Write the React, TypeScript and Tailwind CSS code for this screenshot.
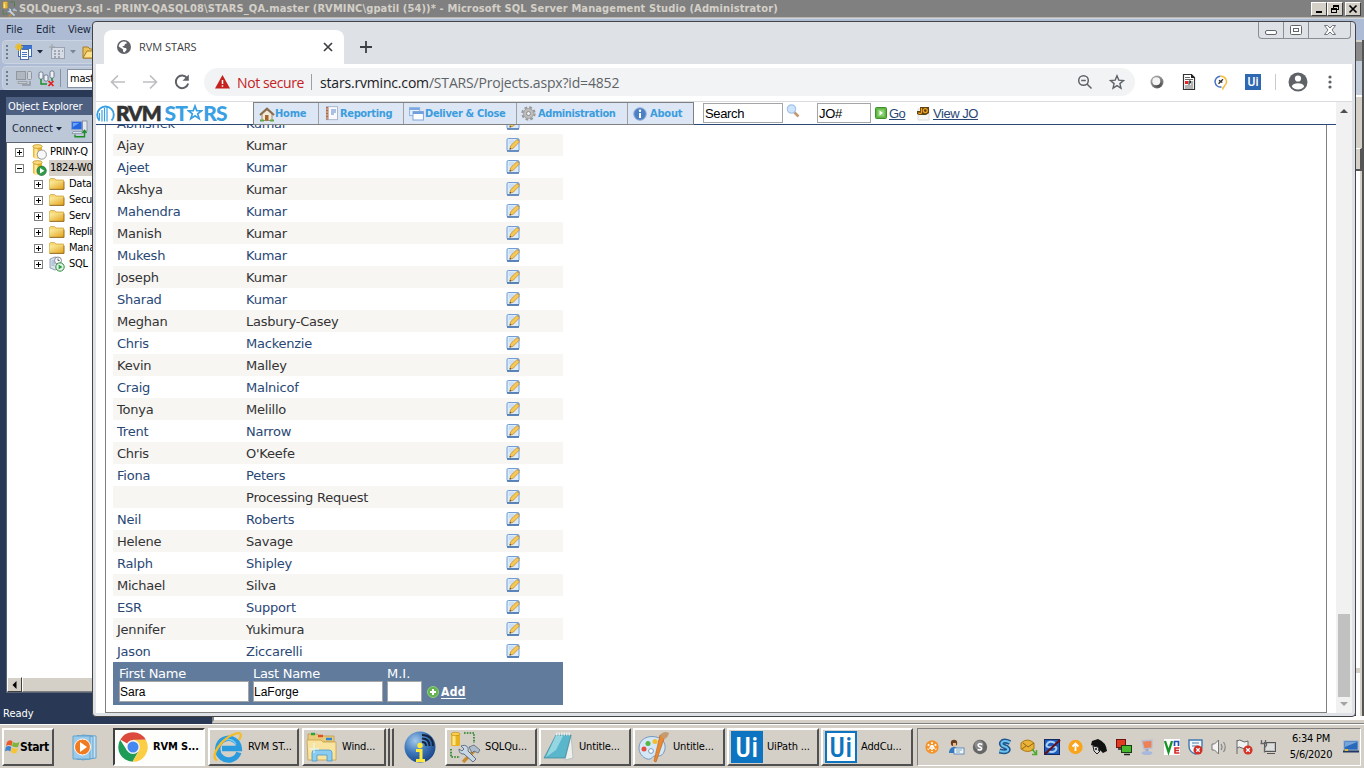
import React from "react";

const tahoma = "font-['DejaVu_Sans_Condensed','DejaVu_Sans',sans-serif] [font-stretch:condensed]";
const verdana = "font-['DejaVu_Sans',sans-serif]";
const segoe = "font-['Open_Sans',sans-serif]";
const arial = "font-['Liberation_Sans',sans-serif]";

const people: [string, string][] = [
  ["Abhishek", "Kumar"],
  ["Ajay", "Kumar"],
  ["Ajeet", "Kumar"],
  ["Akshya", "Kumar"],
  ["Mahendra", "Kumar"],
  ["Manish", "Kumar"],
  ["Mukesh", "Kumar"],
  ["Joseph", "Kumar"],
  ["Sharad", "Kumar"],
  ["Meghan", "Lasbury-Casey"],
  ["Chris", "Mackenzie"],
  ["Kevin", "Malley"],
  ["Craig", "Malnicof"],
  ["Tonya", "Melillo"],
  ["Trent", "Narrow"],
  ["Chris", "O'Keefe"],
  ["Fiona", "Peters"],
  ["", "Processing Request"],
  ["Neil", "Roberts"],
  ["Helene", "Savage"],
  ["Ralph", "Shipley"],
  ["Michael", "Silva"],
  ["ESR", "Support"],
  ["Jennifer", "Yukimura"],
  ["Jason", "Ziccarelli"],
];

function SqlToolsIcon({ size }: { size: number }) {
  return (
    <svg width={size} height={size} viewBox="0 0 32 32" className="shrink-0">
      <rect x="2" y="2" width="9" height="13" rx="1.5" fill="#e9b21d" />
      <rect x="3.5" y="3" width="3" height="11" fill="#fde58a" />
      <ellipse cx="6.5" cy="3" rx="4.5" ry="1.7" fill="#f8d04d" stroke="#b98208" strokeWidth=".6" />
      <path d="M15 2h10v10M2 18v8h9" fill="none" stroke="#1f7d1f" strokeWidth="1.6" strokeDasharray="1.6 1.2" />
      <path d="M27 18 14 31" stroke="#c98d31" strokeWidth="3.4" />
      <path d="M20 16l5-2 6 5-2 3-4-2-2 2z" fill="#aebccb" stroke="#586676" strokeWidth=".8" />
      <path d="M12 15l3 3-2 2-3-2c0 4 2 5 5 5l9 8 3-3-8-8c1-4-2-7-7-5z" fill="#c9d6e4" stroke="#50637b" strokeWidth=".9" />
    </svg>
  );
}

function EditIcon() {
  return (
    <svg width="14" height="16" viewBox="0 0 14 16" className="block">
      <rect x="1" y="1.5" width="12" height="12.500" rx="1.2" fill="#dcebfb" stroke="#6f9fd6" />
      <path d="M1 14h12" stroke="#24549a" strokeWidth="1.200" />
      <path d="M3 4h5M3 6h4M3 11.5h3" stroke="#b7cfea" strokeWidth=".9" />
      <path d="M3.800 12.200l1-3.700L11 2.500l2.500 2.300L7.300 11.200z" fill="#f6c956" stroke="#c18524" strokeWidth=".7" />
      <path d="M11 2.500l.9-.9 2 1.900-.9 1z" fill="#999" />
      <path d="M3.600 12.500l.5-1.500 1.200 1z" fill="#333" />
    </svg>
  );
}

function Expander({ open }: { open?: boolean }) {
  return (
    <svg width="9" height="9" viewBox="0 0 9 9" className="shrink-0" shapeRendering="crispEdges">
      <rect x=".5" y=".5" width="8" height="8" fill="#fff" stroke="#808080" />
      <path d={open ? "M2 4.5h5" : "M2 4.5h5M4.5 2v5"} stroke="#000" />
    </svg>
  );
}

function FolderIcon() {
  return (
    <svg width="16" height="14" viewBox="0 0 16 14" className="shrink-0">
      <defs>
        <linearGradient id="fold" x1="0" y1="0" x2="1" y2="1">
          <stop offset="0" stopColor="#fff0a8" />
          <stop offset="1" stopColor="#e2a21c" />
        </linearGradient>
      </defs>
      <path d="M.5 3.500V2.500l1-1h4L7 3h7.500V12H.5z" fill="#f7d873" stroke="#c9a548" strokeWidth=".8" />
      <path d="M.6 4.5h14.4V12H.6z" fill="url(#fold)" />
      <path d="M.6 12.400h14.400V4.5" fill="none" stroke="#8a6112" strokeWidth=".9" />
    </svg>
  );
}

function ServerIcon({ running }: { running?: boolean }) {
  return (
    <svg width="16" height="16" viewBox="0 0 16 16" className="shrink-0">
      <path d="M1 2.5v10.5c2 2 7 2 9 0V2.5z" fill="#eeb933" />
      <path d="M2.5 3v11.2c1 .4 2 .5 3 .5V3z" fill="#fde9a4" />
      <ellipse cx="5.5" cy="2.5" rx="4.7" ry="1.9" fill="#fbdc79" stroke="#b98c1b" strokeWidth=".7" />
      {running ? (
        <>
          <circle cx="9.6" cy="10.8" r="4.7" fill="#2f9c49" stroke="#1a6d2e" strokeWidth=".7" />
          <path d="M8 8l4.3 2.8L8 13.6z" fill="#fff" />
        </>
      ) : (
        <circle cx="9.8" cy="10.6" r="4.6" fill="#f7f8fa" stroke="#8c8c8c" strokeWidth=".9" />
      )}
    </svg>
  );
}

function AgentIcon() {
  return (
    <svg width="16" height="16" viewBox="0 0 16 16" className="shrink-0">
      <path d="M1 3l5-2 5 1v10l-5 2-5-2z" fill="#d9e3ef" stroke="#7c8da3" strokeWidth=".8" />
      <path d="M2.5 5h4M2.5 7h4M2.5 9h3" stroke="#8299b6" strokeWidth=".8" />
      <circle cx="9" cy="4.5" r="3.5" fill="#f4f6f8" stroke="#778" strokeWidth=".8" />
      <path d="M9 2.5v2h1.6" fill="none" stroke="#345" strokeWidth=".8" />
      <circle cx="11" cy="11" r="4.2" fill="#e5f3e6" stroke="#2a8b3c" strokeWidth="1" />
      <path d="M9.6 8.5l3.8 2.5-3.8 2.5z" fill="#2f9c49" />
    </svg>
  );
}

function ConnectIcon() {
  return (
    <svg width="17" height="18" viewBox="0 0 17 18" className="shrink-0">
      <rect x=".6" y="1.5" width="10.5" height="8" fill="#2366e0" stroke="#8aa4cf" strokeWidth="1.1" />
      <path d="M2 3h6l-6 4z" fill="#6fa3fb" />
      <path d="M2 11.5h9v2H1z" fill="#dfe5ee" stroke="#7b8ca5" strokeWidth=".7" />
      <rect x="11.5" y="1" width="4.5" height="10" fill="#e4e7ec" stroke="#7e8998" strokeWidth=".8" />
      <path d="M4 14.5v2.3h9.5V11M11.5 13l2-2.6 2 2.6" fill="none" stroke="#199020" strokeWidth="1.4" />
    </svg>
  );
}

function Grip() {
  return (
    <svg width="3" height="16" viewBox="0 0 3 16" className="shrink-0" shapeRendering="crispEdges">
      <path d="M1 1v14" stroke="#6b7c97" strokeWidth="2" strokeDasharray="2 2" />
    </svg>
  );
}

function ClassicButton({ children, className = "" }: { children: React.ReactNode; className?: string }) {
  return (
    <div className={"flex items-center justify-center h-[14px] bg-[#d4d0c8] border border-t-white border-l-white border-r-[#404040] border-b-[#404040] " + className}>
      {children}
    </div>
  );
}

function TitleBar() {
  return (
    <div className="flex items-center h-[18px] bg-[#808080] border-b border-b-[#b8b5ae] pl-[2px] pr-[3px] shrink-0">
      <SqlToolsIcon size={16} />
      <div className={tahoma + " ml-px grow text-[11px] font-bold text-[#d4d0c8] whitespace-nowrap tracking-[0.120px] leading-[16px] pt-px"}>
        SQLQuery3.sql - PRINY-QASQL08\STARS_QA.master (RVMINC\gpatil (54))* - Microsoft SQL Server Management Studio (Administrator)
      </div>
      <ClassicButton className="w-[16px]">
        <svg width="10" height="10"><path d="M2 8h6" stroke="#000" strokeWidth="2" /></svg>
      </ClassicButton>
      <ClassicButton className="w-[16px]">
        <svg width="10" height="10" shapeRendering="crispEdges">
          <path d="M3.500 4V1.500h5v4H7M3 2h6" fill="none" stroke="#000" />
          <path d="M1.500 4.500h5v4h-5zM1 5h6" fill="none" stroke="#000" />
        </svg>
      </ClassicButton>
      <ClassicButton className="w-[16px] ml-[2px]">
        <svg width="10" height="10"><path d="M1.500 1.500l7 7M8.500 1.500l-7 7" stroke="#000" strokeWidth="1.700" /></svg>
      </ClassicButton>
    </div>
  );
}

function TreeRow({ label, icon, indent, open, selected }: { label: string; icon: React.ReactNode; indent?: boolean; open?: boolean; selected?: boolean }) {
  return (
    <div className={"flex items-center h-[16px] " + (indent ? "pl-[27px]" : "pl-[8px]")}>
      <Expander open={open} />
      <div className={"flex w-[18px] justify-center " + (indent ? "ml-[5px] mr-[2px]" : "ml-[7px]")}>{icon}</div>
      <div className={"grow h-[16px] leading-[16px] pl-[1px] whitespace-nowrap text-[11px] tracking-[-0.250px] text-black " + (selected ? "bg-[#d4d0c8]" : "")}>{label}</div>
    </div>
  );
}

function ManagementStudio() {
  return (
    <div className={tahoma + " flex flex-col w-[1364px] h-[722px] bg-[#293955]"}>
      <TitleBar />
      <div className="flex items-center h-[22px] shrink-0 bg-[#adbcd4] border-t border-t-[#d0d5dc] pl-[6px] pt-px text-[11px] text-[#1b293e]">
        <span className="w-[30px]">File</span>
        <span className="w-[32px]">Edit</span>
        <span className="tracking-[-0.200px]">View</span>
      </div>
      <div className="flex h-[682px] shrink-0">
        <div className="flex flex-col w-[1356px]">
          <div className="flex flex-col h-[50px] shrink-0 bg-[#adbcd4] pl-[2px] gap-[2px]">
            <div className="flex items-center h-[24px] rounded-l-[4px] bg-[#bcc7d8] border border-[#cad3e2] pl-[3px]">
              <Grip />
              <svg width="18" height="18" viewBox="0 0 18 18" className="ml-[6px]">
                <rect x="3.500" y="2.500" width="13" height="11" fill="#fff" stroke="#3d68b4" />
                <path d="M3 4.500h14" stroke="#3b76d6" strokeWidth="3" />
                <rect x="5.500" y="6.500" width="8" height="10" fill="#fff" stroke="#53719f" />
                <path d="M7 9.500h5M7 11.500h5M7 13.500h5" stroke="#4a76bf" />
                <path d="M4 0v8M0 4h8M1.300 1.300l5.400 5.400M6.700 1.300L1.300 6.700" stroke="#eebc22" strokeWidth="1.300" />
              </svg>
              <svg width="6" height="4" className="ml-[4px]"><path d="M0 0h6L3 3.500z" fill="#1b293e" /></svg>
              <svg width="16" height="16" viewBox="0 0 16 16" className="ml-[6px] opacity-60">
                <rect x="2.500" y="3.500" width="13" height="11" fill="#e8eaee" stroke="#858b95" />
                <path d="M5 7h2M9 7h2M13 7h1M5 10h2M9 10h2M5 13h2M9 13h2" stroke="#707680" strokeWidth="1.500" />
                <path d="M3 0v6M0 3h6" stroke="#888" />
              </svg>
              <svg width="6" height="4" className="ml-[5px]"><path d="M0 0h6L3 3.500z" fill="#7b8695" /></svg>
              <svg width="18" height="16" viewBox="0 0 18 16" className="ml-[6px] shrink-0">
                <path d="M1 14V3h5l2 2h7v9z" fill="#eac15b" stroke="#a77d26" />
                <path d="M1 14L5 7h12l-3 7z" fill="#fde08b" stroke="#a77d26" />
              </svg>
            </div>
            <div className="flex items-center h-[24px] rounded-l-[4px] bg-[#bcc7d8] border border-[#cad3e2] pl-[3px]">
              <Grip />
              <svg width="17" height="16" viewBox="0 0 17 16" className="ml-[7px] opacity-60">
                <rect x=".5" y="1.500" width="9" height="8" fill="#a9adb3" stroke="#777" />
                <path d="M2 11.500h9v2H2z" fill="#ccc" stroke="#888" />
                <rect x="11.500" y="1.500" width="4" height="8" rx="1" fill="#ddd" stroke="#777" />
                <path d="M6 15h8v-4" fill="none" stroke="#777" strokeWidth="1.500" />
              </svg>
              <svg width="17" height="17" viewBox="0 0 17 17" className="ml-[5px]">
                <rect x="1" y="2" width="4" height="7" rx="1.500" fill="#eef1f5" stroke="#6d7a8e" />
                <rect x="6" y="5" width="4" height="6" rx="1.500" fill="#eef1f5" stroke="#6d7a8e" />
                <rect x="12" y="1" width="4" height="7" rx="1.500" fill="#eef1f5" stroke="#6d7a8e" />
                <path d="M3 9v5h6M14 8v3" fill="none" stroke="#1e8e2b" strokeWidth="1.500" />
                <path d="M10.500 11l5 5M15.500 11l-5 5" stroke="#e02020" strokeWidth="1.700" />
              </svg>
              <div className="ml-[5px] h-[18px] w-px bg-[#8591a5]" />
              <div className="ml-[6px] h-[19px] w-[300px] bg-white border border-[#8591a5] pl-[2px] text-[11px] leading-[18px] text-black tracking-[-0.250px]">mast</div>
            </div>
          </div>
          <div className="flex flex-col ml-[6px] mt-[7px] w-[300px]">
            <div className="h-[18px] bg-[#4d6082] pl-[2px] text-[11px] leading-[19px] text-white whitespace-nowrap tracking-[-0.150px]">Object Explorer</div>
            <div className="flex items-center h-[27px] bg-[#bcc7d8] pl-[6px] pt-px text-[11px] text-[#1b293e]">
              <span className="w-[44px] pt-px whitespace-nowrap">Connect</span>
              <svg width="6" height="4"><path d="M0 0h6L3 3.500z" fill="#1b293e" /></svg>
              <div className="ml-[9px]"><ConnectIcon /></div>
            </div>
            <div className="flex flex-col h-[551px] bg-white border border-[#5b6474] pt-[1px]">
              <TreeRow label="PRINY-Q" icon={<ServerIcon />} />
              <TreeRow label="1824-W0" icon={<ServerIcon running />} open selected />
              <TreeRow label="Data" icon={<FolderIcon />} indent />
              <TreeRow label="Secu" icon={<FolderIcon />} indent />
              <TreeRow label="Serv" icon={<FolderIcon />} indent />
              <TreeRow label="Repli" icon={<FolderIcon />} indent />
              <TreeRow label="Mana" icon={<FolderIcon />} indent />
              <TreeRow label="SQL" icon={<AgentIcon />} indent />
              <div className="mt-auto flex h-[15px] bg-[#d4d0c8]">
                <ClassicButton className="w-[15px] !h-[15px]">
                  <svg width="5" height="8"><path d="M4.500 0v8L.5 4z" fill="#000" /></svg>
                </ClassicButton>
                <div className="grow border border-t-white border-l-white border-b-[#808080]" />
              </div>
            </div>
            <div className="h-[28px] -ml-[3px] pt-[13px] text-[11px] leading-[16px] text-white">Ready</div>
          </div>
        </div>
        <div className="flex flex-col w-[8px] bg-[#d4d0c8] border-r-2 border-r-[#555]">
          <div className="h-[21px] bg-[#8a8a8a] border-t-2 border-t-[#d4d0c8]" />
          <div className="h-[36px] bg-[#c3ccd9] border-b-2 border-b-white" />
          <div className="h-[51px]" />
          <div className="h-[23px] border-t border-t-white border-r-2 border-r-[#555] border-b-2 border-b-[#555]" />
          <div className="h-[497px] bg-white border-r-2 border-r-[#d4d0c8]" />
          <div className="h-[5px]" />
          <div className="grow bg-white border-r-2 border-r-[#d4d0c8]" />
        </div>
      </div>
    </div>
  );
}

function BrowserIcons() {
  return (
    <div className="flex items-center">
      <svg width="20" height="20" viewBox="0 0 20 20" className="ml-[12px]">
        <defs>
          <radialGradient id="orb" cx=".6" cy=".7" r=".7">
            <stop offset="0" stopColor="#3e3e3e" />
            <stop offset="1" stopColor="#a7a7a7" />
          </radialGradient>
        </defs>
        <circle cx="10" cy="10" r="6.500" fill="url(#orb)" />
        <circle cx="9.300" cy="9.300" r="4" fill="#f5f5f5" />
      </svg>
      <svg width="14" height="18" viewBox="0 0 14 18" className="ml-[15px]">
        <path d="M1.500 1.500h8l3 3v12h-11z" fill="#fff" stroke="#333" strokeWidth="1.200" />
        <path d="M9 1v4h4z" fill="#222" />
        <path d="M3 4.500h5M3 6.500h8M3 13h8M3 15h8M9 9h2M9 11h2" stroke="#666" />
        <path d="M3 8h3v3H3z" fill="#e22" />
        <path d="M7 12V8h1.500v2H7" fill="none" stroke="#222" />
      </svg>
      <svg width="16" height="16" viewBox="0 0 16 16" className="ml-[17px]">
        <path d="M8.500 13A5.400 5.400 0 1 1 7.500 2.300" fill="none" stroke="#4976c5" strokeWidth="1.500" />
        <path d="M7.500 2.300a5.400 5.400 0 0 1 4 9.500L10 14.500V13" fill="none" stroke="#f6bd3b" strokeWidth="1.500" />
        <path d="M5.500 9.800l4.500-4.500M6 6.300l3.300 2.200" stroke="#333" strokeWidth="1.400" />
      </svg>
      <div className="ml-[16px] flex items-center justify-center w-[16px] h-[16px] bg-[#2f68b2] text-white text-[12px] leading-[16px] font-medium font-['Roboto',sans-serif]">Ui</div>
      <div className="ml-[14px] h-[16px] w-px bg-[#c9cbce]" />
      <svg width="20" height="20" viewBox="0 0 20 20" className="ml-[12px]">
        <circle cx="10" cy="10" r="9.500" fill="#5f6368" />
        <circle cx="10" cy="6.500" r="3.100" fill="#fff" />
        <path d="M3.800 14.500c1-4.300 11.400-4.300 12.400 0-2.600 4-9.800 4-12.400 0z" fill="#fff" />
      </svg>
      <svg width="4" height="16" viewBox="0 0 4 16" className="ml-[20px]">
        <circle cx="2" cy="3" r="1.600" fill="#5f6368" />
        <circle cx="2" cy="8" r="1.600" fill="#5f6368" />
        <circle cx="2" cy="13" r="1.600" fill="#5f6368" />
      </svg>
    </div>
  );
}

function HomeIcon() {
  return (
    <svg width="16" height="16" viewBox="0 0 16 16">
      <path d="M3 8v6.500h10V8L8 4z" fill="#f2ead9" stroke="#8c7a5c" strokeWidth=".8" />
      <path d="M1 9l7-6.500L15 9" fill="none" stroke="#8b6d4b" strokeWidth="2" />
      <rect x="6" y="9" width="3.500" height="5.500" fill="#a6662b" />
      <path d="M1 14.500h4M11 14.500h4" stroke="#62a646" strokeWidth="2" />
    </svg>
  );
}

function NotebookIcon() {
  return (
    <svg width="13" height="15" viewBox="0 0 13 15">
      <rect x="1.500" y=".7" width="11" height="13" fill="#f8faff" stroke="#9aa9c2" strokeWidth=".8" />
      <path d="M1 1v12.500h2.500V1z" fill="#b06a4a" />
      <path d="M0 3h3M0 6h3M0 9h3M0 12h3" stroke="#ddd" strokeWidth=".8" />
      <path d="M6 4h5M6 6h5M6 8h3" stroke="#5c88c9" />
    </svg>
  );
}

function WindowsIcon() {
  return (
    <svg width="15" height="14" viewBox="0 0 15 14">
      <rect x=".6" y=".6" width="10" height="8" fill="#e9f2fc" stroke="#8fb4e2" />
      <path d="M.6 2h10" stroke="#7ea9e0" strokeWidth="2" />
      <rect x="4" y="4.500" width="10.400" height="8.500" fill="#fdfeff" stroke="#7ea6d9" />
      <path d="M4 6h10.400" stroke="#6f9fdd" strokeWidth="2" />
    </svg>
  );
}

function GearIcon() {
  return (
    <svg width="15" height="15" viewBox="0 0 15 15">
      <circle cx="7.500" cy="7.500" r="6" fill="none" stroke="#9a9a9a" strokeWidth="2.400" strokeDasharray="2.700 2.012" />
      <circle cx="7.500" cy="7.500" r="5" fill="#bdbdbd" stroke="#a2a2a2" />
      <circle cx="7.500" cy="7.500" r="2" fill="#eee" stroke="#8e8e8e" />
    </svg>
  );
}

function InfoIcon() {
  return (
    <svg width="14" height="14" viewBox="0 0 14 14">
      <circle cx="7" cy="7" r="6.300" fill="#4d7fc4" stroke="#9ab6dc" />
      <path d="M7 6v5" stroke="#fff" strokeWidth="2" />
      <circle cx="7" cy="3.800" r="1.200" fill="#fff" />
    </svg>
  );
}

function RvmLogo() {
  return (
    <div className="flex items-center w-[157px] h-[21px] font-['Lato',sans-serif] font-black leading-[20px]">
      <svg width="19" height="18" viewBox="0 0 19 18" className="shrink-0">
        <path d="M3.500 16.500A8.300 8.300 0 1 1 15.500 16.500" fill="none" stroke="#3aa0e4" strokeWidth="1.900" />
        <path d="M3.500 16.500V9M6 17.500V6M8.500 17.500V4M11 17.500V2" stroke="#3aa0e4" strokeWidth="1.200" />
      </svg>
      <span className="text-[21px] tracking-[-1.100px] text-[#333] ml-[1px] [-webkit-text-stroke:0.6px_#333]">RVM</span>
      <span className="flex items-center ml-[4px] text-[21px] tracking-[-0.800px] text-[#3aa0e4]">
        ST
        <svg width="16" height="17" viewBox="0 0 15 17">
          <path d="M7.500 2l1.700 4.600 5 .1-4 3 1.500 5-4.200-3-4.200 3 1.500-5-4-3 5-.1z" fill="#fff" stroke="#3aa0e4" strokeWidth="1.700" />
        </svg>
        RS
      </span>
    </div>
  );
}

function NavItem({ icon, label, className }: { icon: React.ReactNode; label: string; className: string }) {
  return (
    <div className={"flex items-center h-full text-[11px] font-bold text-[#3b9ddd] whitespace-nowrap " + className}>
      {icon}
      <span className="leading-[20px]">{label}</span>
    </div>
  );
}

function SiteHeader() {
  return (
    <div className="flex h-[23px] shrink-0 bg-white border-b border-b-[#284775]">
      <RvmLogo />
      <div className={tahoma + " flex w-[441px] h-[23px] bg-[#dde6f5] border border-[#808080]"}>
        <NavItem icon={<HomeIcon />} label="Home" className="w-[64px] pl-[5px] tracking-[-0.200px]" />
        <NavItem icon={<NotebookIcon />} label="Reporting" className="w-[85px] pl-[6px] gap-[2px] border-l border-l-[#a0a0a0] tracking-[-0.350px]" />
        <NavItem icon={<WindowsIcon />} label="Deliver & Close" className="w-[113px] pl-[5px] gap-[1px] border-l border-l-[#a0a0a0] tracking-[-0.330px]" />
        <NavItem icon={<GearIcon />} label="Administration" className="w-[111px] pl-[4px] gap-[2px] border-l border-l-[#a0a0a0] tracking-[-0.400px]" />
        <NavItem icon={<InfoIcon />} label="About" className="grow pl-[5px] gap-[3px] border-l border-l-[#a0a0a0] tracking-[-0.200px]" />
      </div>
      <div className={arial + " flex items-center text-[13px] text-black"}>
        <div className="ml-[9px] w-[80px] h-[20px] border border-[#a5a5a5] pl-[1px] leading-[20px] tracking-[-0.350px]">Search</div>
        <svg width="14" height="14" viewBox="0 0 14 14" className="ml-[3px] mb-[5px]">
          <path d="M8 8l4.500 4.500" stroke="#c59a72" strokeWidth="2.600" />
          <circle cx="5.500" cy="5" r="4.200" fill="#cfe4fa" stroke="#a5c6ec" strokeWidth="1.200" />
        </svg>
        <div className="ml-[17px] w-[54px] h-[20px] border border-[#a5a5a5] pl-[1px] leading-[20px] tracking-[-0.300px]">JO#</div>
        <svg width="12" height="12" viewBox="0 0 12 12" className="ml-[4px]">
          <rect x=".5" y=".5" width="11" height="11" rx="1" fill="#5fb544" stroke="#3e8f2a" />
          <rect x="2.500" y="2.500" width="7" height="7" fill="#8bd06f" />
          <path d="M4.500 3.500L8 6 4.500 8.500z" fill="#fff" />
        </svg>
        <span className="ml-[2px] w-[16px] pt-[2px] text-[#284775] underline underline-offset-1 tracking-[-0.500px]">Go</span>
        <svg width="13" height="15" viewBox="0 0 13 15" className="ml-[12px]">
          <path d="M1 3h11v11H1z" fill="#f5f5f3" stroke="#ddd" />
          <path d="M3 1h9v6l-3 2H2L0 8V5h3z" fill="#5d4213" />
          <path d="M4.500 2v4.500c0 1.500-2.500 1.500-3 0" fill="none" stroke="#f1a11e" strokeWidth="1.300" />
          <circle cx="8.300" cy="4.600" r="2" fill="none" stroke="#f1a11e" strokeWidth="1.300" />
        </svg>
        <span className="ml-[3px] pt-[2px] text-[#284775] underline underline-offset-1 tracking-[-0.450px]">View JO</span>
      </div>
    </div>
  );
}

function AddPersonForm() {
  return (
    <div className="flex h-[43px] bg-[#617b9d] pl-[6px] gap-[4px] text-[13px] text-white">
      <div className="w-[130px]">
        <div className="h-[19px] leading-[23px] tracking-[-0.300px]">First Name</div>
        <div className={arial + " h-[21px] bg-white border border-[#a5a5a5] text-black text-[12px] leading-[20px]"}>Sara</div>
      </div>
      <div className="w-[130px]">
        <div className="h-[19px] leading-[23px] tracking-[-0.300px]">Last Name</div>
        <div className={arial + " h-[21px] bg-white border border-[#a5a5a5] text-black text-[12px] leading-[20px]"}>LaForge</div>
      </div>
      <div className="w-[35px]">
        <div className="h-[19px] leading-[23px] whitespace-nowrap">M.I.</div>
        <div className="h-[21px] bg-white border border-[#a5a5a5]" />
      </div>
      <div className="flex items-center h-[20px] mt-[20px] ml-[1px] gap-[2px]">
        <svg width="12" height="12" viewBox="0 0 12 12" className="-mt-px">
          <circle cx="6" cy="6" r="5.500" fill="#65b250" stroke="#91cb80" />
          <path d="M6 3v6M3 6h6" stroke="#fff" strokeWidth="2" />
        </svg>
        <span className={tahoma + " font-bold text-[12px] underline underline-offset-2 tracking-[0.300px]"}>Add</span>
      </div>
    </div>
  );
}

function PeopleTable() {
  return (
    <div className={verdana + " flex flex-col w-[450px] text-[13px]"}>
      {people.map(([first, last], i) => (
        <div key={i} className={"flex items-center h-[22px] leading-[20px] tracking-[-0.230px] " + (i % 2 ? "bg-[#f7f6f3] text-[#333]" : "bg-white text-[#284775]")}>
          <div className="w-[129px] pl-[4px] pt-[2px] whitespace-nowrap">{first}</div>
          <div className="w-[264px] pl-[4px] pt-[2px] whitespace-nowrap">{last}</div>
          <EditIcon />
        </div>
      ))}
      <AddPersonForm />
    </div>
  );
}

function Browser() {
  return (
    <div className="flex flex-col w-[1264px] h-[696px] bg-[#dee1e6] border border-[#444] rounded-[4px] pl-[3px] pr-[3px] overflow-hidden">
      <div className="flex h-[42px] shrink-0">
        <div className={segoe + " flex items-center self-end ml-[8px] w-[240px] h-[34px] bg-white rounded-t-[8px] pl-[12px] pr-[11px] text-[12px] text-[#3c4043]"}>
          <svg width="16" height="16" viewBox="0 0 16 16">
            <circle cx="8" cy="8" r="7" fill="#5f6368" />
            <path d="M7 2.500l3 .2 1 1.600-2 .8-.6 1.700-2.200.7 1.700 1.300 2.300.4.500 1.500-2.300 2.800-1.200-.7-.3-2.500L4.600 8.700 2.700 7.600c.2-2.400 1.900-4.500 4.300-5.100z" fill="#fff" />
          </svg>
          <span className="ml-[7px] grow text-[11px] pt-px tracking-[-0.050px]">RVM STARS</span>
          <svg width="10" height="10"><path d="M1 1l8 8M9 1L1 9" stroke="#3c4043" strokeWidth="1.700" /></svg>
        </div>
        <svg width="14" height="14" className="ml-[15px] mt-[18px]"><path d="M7 1v12M1 7h12" stroke="#3c4043" strokeWidth="1.800" /></svg>
        <div className="ml-auto mr-[1px] flex w-[93px] h-[17px] border border-t-0 border-[#8b8e93] rounded-b-[4px]">
          <div className="flex items-end justify-center w-[25px] pb-[3px] border-r border-r-[#8b8e93]">
            <svg width="12" height="5"><rect x=".5" y=".5" width="11" height="4" rx="1.500" fill="#fff" stroke="#62656a" /></svg>
          </div>
          <div className="flex items-center justify-center w-[25px] border-r border-r-[#8b8e93]">
            <svg width="12" height="10"><rect x=".5" y=".5" width="11" height="9" rx="1" fill="#fff" stroke="#62656a" /><rect x="3.500" y="3.500" width="5" height="3" fill="none" stroke="#62656a" /></svg>
          </div>
          <div className="flex items-center justify-center grow">
            <svg width="12" height="10" viewBox="0 0 12 10"><path d="M.5.5h3L6 3 8.500.5h3L8 5l3.500 4.500h-3L6 7 3.500 9.500h-3L4 5z" fill="#fff" stroke="#62656a" strokeWidth=".9" /></svg>
          </div>
        </div>
      </div>
      <div className="flex items-center h-[38px] shrink-0 bg-white border-b border-b-[#dadce0] pl-[13px] pb-px">
        <svg width="18" height="18" viewBox="0 0 18 18"><path d="M9 2.500L2.500 9 9 15.500M2.500 9H16" fill="none" stroke="#bcbec1" strokeWidth="1.700" /></svg>
        <svg width="18" height="18" viewBox="0 0 18 18" className="ml-[14px]"><path d="M9 2.500L15.500 9 9 15.500M15.500 9H2" fill="none" stroke="#bcbec1" strokeWidth="1.700" /></svg>
        <svg width="18" height="18" viewBox="0 0 18 18" className="ml-[14px]">
          <path d="M14.300 5.200A6.300 6.300 0 1 0 15.200 10.500" fill="none" stroke="#5f6368" strokeWidth="2" />
          <path d="M15.800 1.500v6.300H9.500z" fill="#5f6368" />
        </svg>
        <div className={segoe + " flex items-center ml-[13px] w-[931px] h-[28px] rounded-full bg-[#f1f3f4] pl-[11px] pr-[10px] text-[14px] text-[#202124]"}>
          <svg width="15" height="14" viewBox="0 0 15 14"><path d="M7.500 0L15 13.500H0z" fill="#c5221f" /><path d="M7.500 5v4M7.500 10.200v1.600" stroke="#fff" strokeWidth="1.500" /></svg>
          <span className="ml-[7px] w-[73px] shrink-0 whitespace-nowrap tracking-[-0.400px] text-[#c5221f]">Not secure</span>
          <span className="w-px h-[16px] mr-[8px] ml-px bg-[#9aa0a6]" />
          <span className="grow whitespace-nowrap tracking-[-0.180px] text-[#5f6368]"><span className="text-[#202124]">stars.rvminc.com</span>/STARS/Projects.aspx?id=4852</span>
          <svg width="16" height="16" viewBox="0 0 16 16"><circle cx="6.500" cy="6.500" r="4.800" fill="none" stroke="#5f6368" strokeWidth="1.500" /><path d="M10 10l4.500 4.500M4.200 6.500h4.600" stroke="#5f6368" strokeWidth="1.500" /></svg>
          <svg width="16" height="16" viewBox="0 0 16 16" className="ml-[16px]"><path d="M8 1.800l1.800 4.300 4.700.4-3.600 3.100 1.100 4.600L8 11.700l-4 2.500 1.100-4.600L1.500 6.500l4.700-.4z" fill="none" stroke="#5f6368" strokeWidth="1.400" /></svg>
        </div>
        <BrowserIcons />
      </div>
      <div className="flex h-[611px] shrink-0 bg-white">
        <div className="flex flex-col w-[1240px]">
          <SiteHeader />
          <div className="flex ml-[9px] w-[1222px] h-[588px] border border-t-0 border-[#808080] overflow-hidden pl-[7px]">
            <div className="-mt-[13px]">
              <PeopleTable />
            </div>
          </div>
        </div>
        <div className="flex flex-col items-center w-[16px] bg-[#f1f1f1]">
          <svg width="8" height="4" className="mt-[7px]"><path d="M0 4h8L4 0z" fill="#505050" /></svg>
          <div className="mt-[501px] w-[12px] h-[83px] bg-[#c1c1c1]" />
          <svg width="8" height="4" className="mt-[5px]"><path d="M0 0h8L4 4z" fill="#a3a3a3" /></svg>
        </div>
      </div>
    </div>
  );
}

function TaskButton({ icon, label, active, className = "" }: { icon: React.ReactNode; label: string; active?: boolean; className?: string }) {
  return (
    <div className={"flex items-center h-[38px] border-2 pl-[2px] text-[11px] text-black whitespace-nowrap tracking-[-0.150px] " + (active ? "bg-[#fdfdfc] border-t-[#404040] border-l-[#404040] border-r-white border-b-white font-bold " : "bg-[#d4d0c8] border-t-white border-l-white border-r-[#505050] border-b-[#505050] ") + className}>
      {icon}
      <span className="ml-[4px]">{label}</span>
    </div>
  );
}

function ChromeLogo() {
  return (
    <svg width="30" height="30" viewBox="0 0 30 30" className="shrink-0 ml-[1px] mr-px">
      <path d="M15 15L2.300 7.500A14.700 14.700 0 0 1 27.800 7.800L15 8z" fill="#dc4a3d" />
      <path d="M2.200 7.700A14.700 14.700 0 0 0 14.500 29.700L21 18.500 15 15 9 18.500z" fill="#1f9d58" />
      <path d="M27.800 7.800H15l6 10.800-6.500 11.100A14.700 14.700 0 0 0 27.800 7.800z" fill="#fcce44" />
      <circle cx="15" cy="15" r="6.900" fill="#f4f4f4" />
      <circle cx="15" cy="15" r="5.500" fill="#4688f1" />
    </svg>
  );
}

function IeLogo() {
  return (
    <svg width="32" height="32" viewBox="0 0 32 32" className="shrink-0">
      <path d="M26.800 21.500A10.800 10.800 0 1 1 27.300 17.500H10" fill="none" stroke="#2b9bdf" strokeWidth="5.400" />
      <path d="M8 13.500a9 9 0 0 1 16 0" fill="none" stroke="#76cdf6" strokeWidth="1.500" />
      <path d="M5 29.500C-3 25 10 7 24 2.500c6-1.500 5.500 2 3 6.500" fill="none" stroke="#f4bd26" strokeWidth="2.300" />
    </svg>
  );
}

function FoldersLogo() {
  return (
    <svg width="32" height="30" viewBox="0 0 32 30" className="shrink-0">
      <path d="M2 4V2h9l2 2h15v6H2z" fill="#e9cc7b" stroke="#bf9a47" strokeWidth=".8" />
      <path d="M5 2h4" stroke="#2aa53d" strokeWidth="2.500" />
      <path d="M12 4h5" stroke="#e04e2a" strokeWidth="2.500" />
      <path d="M20 7h6" stroke="#2e85d8" strokeWidth="2.500" />
      <path d="M1 8h14l2 2h13v18H2z" fill="#f9e49f" stroke="#c9a550" strokeWidth=".9" />
      <path d="M6 29v-8q0-3 3-3h14q3 0 3 3v8h-5v-6H11v6z" fill="#8acdf1" stroke="#4998c9" strokeWidth=".8" />
      <path d="M8 11v10M3 17h10" stroke="#e5f8ff" />
    </svg>
  );
}

function NotepadLogo() {
  return (
    <svg width="32" height="32" viewBox="0 0 32 32" className="shrink-0">
      <path d="M28 4l2 23-8 2z" fill="#eef0ee" stroke="#a6b5b7" strokeWidth=".7" />
      <path d="M13 4h15l-6 23H1z" fill="#5ab6ca" stroke="#3c8795" strokeWidth=".7" />
      <path d="M13 4.500l7 .5-7 14L3 26z" fill="#94d6e2" />
      <path d="M13 3h15" stroke="#e8eeef" strokeWidth="3" strokeDasharray="1.500 1" />
    </svg>
  );
}

function PaintLogo() {
  return (
    <svg width="33" height="32" viewBox="0 0 33 32" className="shrink-0 -mr-px">
      <path d="M2 17C2 8 11 4 19 6c8 1 11 9 8 15-2 5-7 4-9 4-3 0-3 4-8 3-5-2-8-6-8-11z" fill="#d4e7f7" stroke="#7899bb" />
      <circle cx="7" cy="18" r="2.500" fill="#e64f3d" />
      <circle cx="11" cy="12.500" r="2.500" fill="#55b545" />
      <circle cx="18" cy="10.500" r="2.500" fill="#f5bd30" />
      <circle cx="14" cy="20" r="2.400" fill="#fff" stroke="#7899bb" />
      <path d="M28 5l-9 26-2-1 6-26z" fill="#e98a33" stroke="#b75d1a" strokeWidth=".6" />
      <path d="M23 4q4-5 9-2-1 5-5 6z" fill="#c59b72" />
    </svg>
  );
}

function UiLogo({ invert }: { invert?: boolean }) {
  return (
    <div className={"flex items-center justify-center shrink-0 w-[32px] h-[32px] pt-[2px] text-[27px] leading-[28px] font-medium tracking-[0.500px] font-['Roboto',sans-serif] border-2 border-[#0c74c0] " + (invert ? "bg-white text-[#0c74c0]" : "bg-[#0c74c0] text-white")}>
      Ui
    </div>
  );
}

function SystemTray() {
  return (
    <div className="flex items-center w-[444px] h-[38px] border border-t-[#808080] border-l-[#808080] border-r-white border-b-white pl-[7px]">
      <svg width="344" height="18" viewBox="0 0 344 18" className="shrink-0">
        <circle cx="7" cy="9" r="6.700" fill="#f5932b" />
        <path d="M7 4v10M2.700 6.500l8.600 5M11.300 6.500l-8.600 5" stroke="#fff" strokeWidth="1.600" strokeDasharray="2 1" />
        <circle cx="29" cy="5" r="3.200" fill="#6b3d1e" />
        <path d="M28 5h3v3h-3z" fill="#e9b98d" />
        <path d="M24 15c0-8 10-8 10 0z" fill="#3279c4" />
        <rect x="29" y="10" width="10" height="6" fill="#eef5fc" stroke="#4878b0" strokeWidth=".8" />
        <path d="M31 12h6M31 14h4" stroke="#69a" strokeWidth=".8" />
        <circle cx="55" cy="9" r="7.200" fill="#666" /><circle cx="54" cy="7" r="4.500" fill="#8b8b8b" />
        <path d="M57.300 6.500c-4-2-6 1-2.300 2.500s1 4-2.500 2.500" fill="none" stroke="#fff" strokeWidth="1.500" />
        <path d="M85 4.500c-9-4-11 2.500-5.500 4s5.500 7-5 4.500" fill="none" stroke="#1c5790" strokeWidth="5" />
        <path d="M85 4.500c-9-4-11 2.500-5.500 4s5.500 7-5 4.500" fill="none" stroke="#6ec2ed" strokeWidth="2" />
        <path d="M96 5q6.500-6 13 0v6q-6 5-13 0z" fill="#eab238" stroke="#a97914" /><path d="M98 5l5 4 6-4M97 11l4-3" fill="none" stroke="#8f6511" />
        <path d="M107 11l4 5M111.500 12v4.500H107" stroke="#4caa2c" strokeWidth="1.500" fill="none" />
        <rect x="119.500" y="1.500" width="15" height="15" fill="#205bc0" stroke="#102b60" />
        <path d="M130 5q-6-3-8 1t5 3 3 4q-3 2-7 0" stroke="#a9d1f5" strokeWidth="2" fill="none" />
        <path d="M120 16l15-14" stroke="#641016" strokeWidth="2" />
        <circle cx="150.500" cy="9" r="7.200" fill="#f9a41f" /><path d="M150.500 13V6M147.500 8.500l3-3 3 3" fill="none" stroke="#fff" strokeWidth="1.800" />
        <path d="M167 3l6-2q8 3 9 12l-4 2-6-6-6-2z" fill="#111" /><path d="M168 8l5 1 2 4-3 3-3-3z" fill="#d8d8d8" stroke="#222" /><path d="M170 11h2M173 12h2" stroke="#111" strokeWidth="1.500" />
        <rect x="191.500" y="1.500" width="9" height="8" fill="#e23920" stroke="#6b160c" /><rect x="196.500" y="7.500" width="10" height="7" fill="#48b72f" stroke="#173d12" /><path d="M193 11h3M199 16.500h6" stroke="#222" strokeWidth="1.500" />
        <path d="M217 3l10-1v8l-8 1z" fill="#ee8056" stroke="#b8bed2" strokeWidth="1.300" /><path d="M222 11v2" stroke="#99a9cc" strokeWidth="3" /><ellipse cx="222" cy="15" rx="5.500" ry="2" fill="#a7b9dc" />
        <rect x="239" y="1" width="16" height="16" fill="#fff" />
        <path d="M240 3l3.500 11L247 3" fill="none" stroke="#179225" strokeWidth="2.300" />
        <path d="M249.500 8V3.500h4V8" fill="none" stroke="#204fb3" strokeWidth="1.700" /><path d="M254.500 10h-4.500v5h4.500M250 12.500h4" fill="none" stroke="#d42b28" strokeWidth="1.600" />
        <path d="M264 2h13v6q0 6-6.500 8-6.500-2-6.500-8z" fill="#f2f8fd" stroke="#4079ae" strokeWidth="1.400" /><path d="M267 5h7M267 8h6" stroke="#4a7dad" strokeWidth="1.200" />
        <circle cx="273" cy="12" r="4.500" fill="#d12d24" /><path d="M271.300 10.300l3.400 3.400M274.700 10.300l-3.400 3.400" stroke="#fff" strokeWidth="1.300" />
        <path d="M287 6h2.500l4-4v14l-4-4H287z" fill="#f4f4f4" stroke="#777" /><path d="M296 6q2 3 0 6M298.500 4q3.500 5 0 10" fill="none" stroke="#888" strokeWidth="1.200" />
        <path d="M312 16V2M312 3q3-2 5 0t6 0v7q-3 2-6 0t-5 0" fill="#f1f1f1" stroke="#666" />
        <circle cx="323" cy="12" r="4.600" fill="#d43127" /><path d="M321.200 10.200l3.600 3.600M324.800 10.200l-3.600 3.600" stroke="#fff" strokeWidth="1.300" />
      </svg>
      <svg width="16" height="16" viewBox="0 0 16 16" className="-ml-[9px] shrink-0">
        <rect x="4.500" y="3.500" width="11" height="9" fill="#bfc1c2" stroke="#555" /><rect x="6" y="5" width="8" height="6" fill="#dddedd" />
        <path d="M7 14.500h8" stroke="#555" />
        <path d="M1.500 1v3M5.500 1v3M.5 4.500h6v2l-2 2v5" fill="none" stroke="#666" strokeWidth="1.300" />
      </svg>
      <div className="flex flex-col items-center ml-[12px] w-[48px] text-[11px] leading-[16px] tracking-[-0.250px] text-black whitespace-nowrap">
        <span>6:34 PM</span>
        <span>5/6/2020</span>
      </div>
      <svg width="17" height="14" viewBox="0 0 17 14" className="ml-[9px] shrink-0">
        <rect x="1" y="1" width="14" height="9" fill="#2869ba" stroke="#8cacd1" />
        <path d="M2 2h12L2 7z" fill="#76a5dc" /><path d="M0 11.500h16" stroke="#203861" strokeWidth="2" /><path d="M2 10h3" stroke="#e5bb31" strokeWidth="2" />
      </svg>
    </div>
  );
}

function Taskbar() {
  return (
    <div className={tahoma + " flex items-start w-[1364px] h-[44px] bg-[#d4d0c8] border-t border-t-white pt-[3px] pl-[2px]"}>
      <div className="flex items-center w-[52px] h-[38px] border-2 border-t-white border-l-white border-r-[#505050] border-b-[#505050] pl-[1px] text-[12px] font-bold text-black">
        <svg width="15" height="16" viewBox="0 0 15 16" className="shrink-0">
          <path d="M2 3q3-3 5.500-.5L6.500 7Q4 5 1 7z" fill="#e75b2c" />
          <path d="M8 3q3 2 6.500 0L13 8q-3 1-6-1z" fill="#7eb53a" />
          <path d="M.8 8q3-2 5.500 0l-1 4.500Q3 10.500 0 12.500z" fill="#3f83d0" />
          <path d="M7 8.500q3 2 6 .5l-1.300 4.500q-3 2-6-.5z" fill="#f6c435" />
        </svg>
        <span className="tracking-[-0.400px]">Start</span>
      </div>
      <svg width="28" height="28" viewBox="0 0 28 28" className="ml-[18px] mt-[6px] shrink-0">
        <path d="M10 1l14 1v22l-14 2z" fill="#c6e2f4" stroke="#65a2cc" />
        <path d="M5 1.500l16 1v22l-16 1z" fill="#aad4ee" stroke="#65a2cc" />
        <path d="M1 2h17v23H1z" fill="#9bcbea" stroke="#65a2cc" />
        <circle cx="10.500" cy="13" r="8" fill="#f17b21" stroke="#fff" />
        <path d="M8 8l7 5-7 5z" fill="#fff" />
      </svg>
      <TaskButton active icon={<ChromeLogo />} label="RVM S..." className="ml-[13px] w-[92px]" />
      <TaskButton icon={<IeLogo />} label="RVM ST..." className="ml-[3px] w-[91px]" />
      <TaskButton icon={<FoldersLogo />} label="Wind..." className="ml-[3px] w-[84px]" />
      <div className="w-[4px] h-[38px] border-r-2 border-r-[#505050] border-t border-t-white" />
      <div className="w-[4px] h-[38px] border-r-2 border-r-[#505050] border-t border-t-white" />
      <svg width="32" height="34" viewBox="0 0 32 34" className="ml-[10px] mt-[2px] shrink-0">
        <defs>
          <radialGradient id="globe" cx=".35" cy=".3" r=".8">
            <stop offset="0" stopColor="#a4c9ec" />
            <stop offset=".5" stopColor="#3c77bb" />
            <stop offset="1" stopColor="#173f80" />
          </radialGradient>
        </defs>
        <circle cx="16" cy="17" r="15.500" fill="url(#globe)" />
        <circle cx="16" cy="15.500" r="2.700" fill="#ffe93b" />
        <path d="M12 20.500h5V30M12 30.500h9" stroke="#ffe93b" strokeWidth="3" fill="none" />
        <path d="M18 12q4 0 4 4M18 8.500q7.500 0 7.500 7.500M18 5q11 0 11 11" fill="none" stroke="#14263f" strokeWidth="2" />
      </svg>
      <TaskButton icon={<SqlToolsIcon size={32} />} label="SQLQu..." className="ml-[9px] w-[92px]" />
      <TaskButton icon={<NotepadLogo />} label="Untitle..." className="ml-[2px] w-[92px]" />
      <TaskButton icon={<PaintLogo />} label="Untitle..." className="ml-[2px] w-[92px]" />
      <TaskButton icon={<UiLogo />} label="UiPath ..." className="ml-[2px] w-[92px]" />
      <TaskButton icon={<UiLogo invert />} label="AddCu..." className="ml-[2px] w-[92px]" />
      <div className="ml-[4px]"><SystemTray /></div>
    </div>
  );
}

export default function App() {
  return (
    <div className="relative flex flex-col w-[1364px] h-[768px] overflow-hidden bg-[#d4d0c8]">
      <ManagementStudio />
      <div className="flex h-[2px] w-full bg-[#808080]">
        <div className="w-[212px] bg-[#293955]" />
      </div>
      <Taskbar />
      <div className="absolute left-[212px] top-[716px] w-[1152px] h-[7px] bg-white border-l-2 border-l-[#808080] border-b-[3px] border-b-[#d4d0c8]" />
      <div className="absolute left-[92px] top-[21px]">
        <Browser />
      </div>
    </div>
  );
}
